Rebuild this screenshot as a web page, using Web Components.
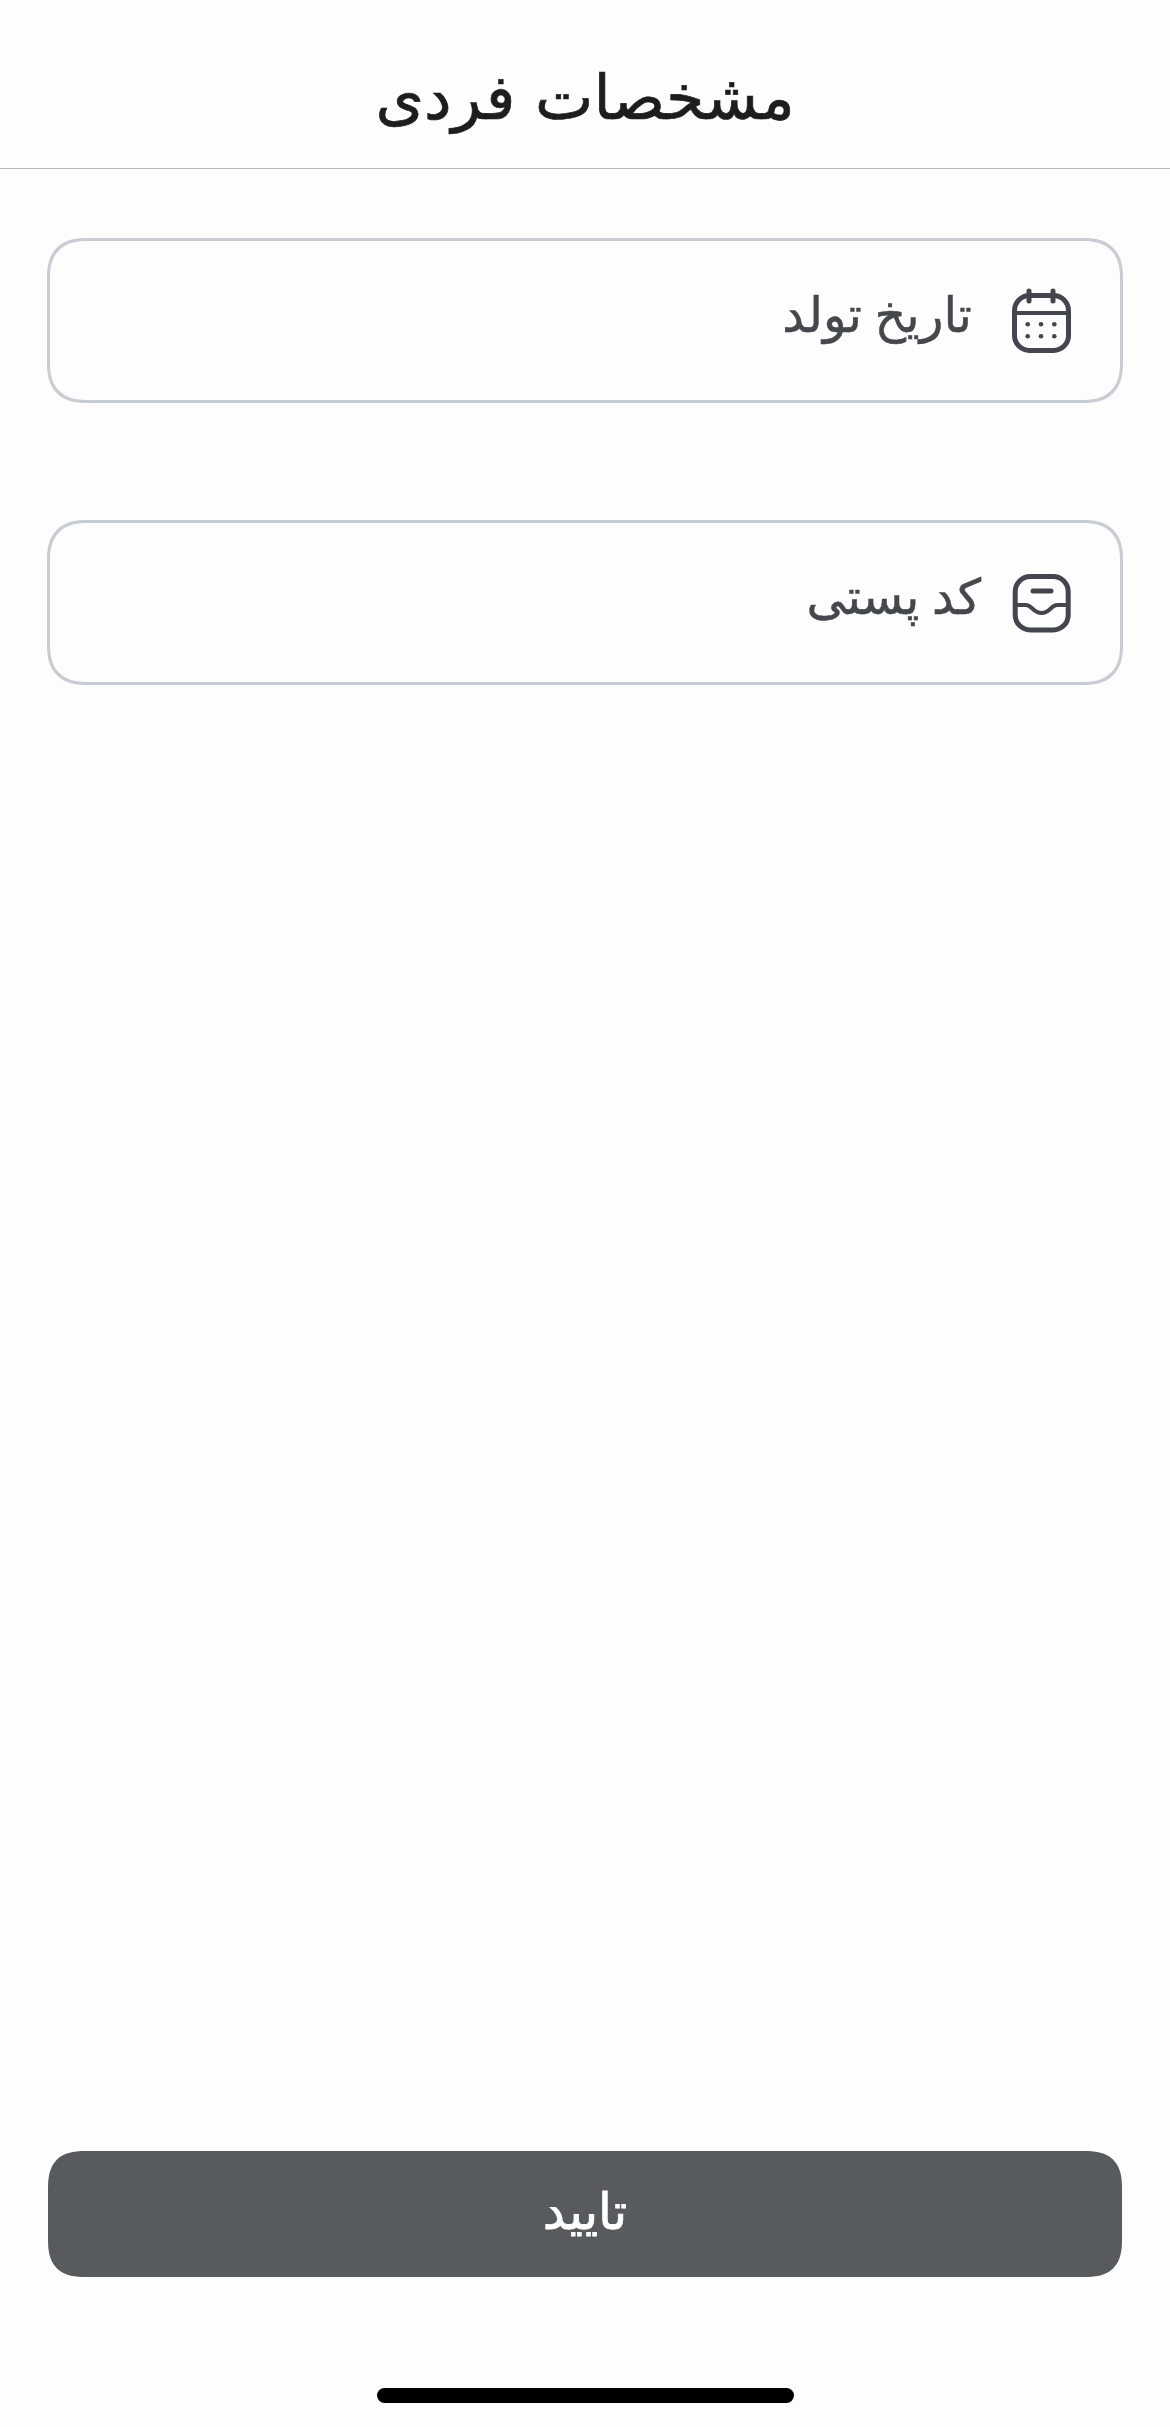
<!DOCTYPE html>
<html lang="fa" dir="rtl">
<head>
<meta charset="utf-8">
<title>مشخصات فردی</title>
<style>
    html, body { margin: 0; padding: 0; background: #fdfdfe; }
    body { font-family: "DejaVu Sans", sans-serif; }
</style>
</head>
<body>
<profile-screen>
    <screen-header slot="header">مشخصات فردی</screen-header>
    <form-field style="--icon-gap: 37px">
        <svg slot="icon" width="64" height="68" viewBox="0 0 64 68" fill="none" stroke="#43474d" stroke-linecap="round">
            <rect x="5.5" y="8.5" width="54" height="55" rx="15" stroke-width="5"/>
            <path d="M20 4V14M44 4V14" stroke-width="5"/>
            <path d="M5.5 26H59.5" stroke-width="4"/>
            <g fill="#43474d" stroke="none">
                <circle cx="18.7" cy="37.3" r="2.3"/><circle cx="32" cy="37.3" r="2.3"/><circle cx="45.3" cy="37.3" r="2.3"/>
                <circle cx="18.7" cy="49.3" r="2.3"/><circle cx="32" cy="49.3" r="2.3"/><circle cx="45.3" cy="49.3" r="2.3"/>
            </g>
        </svg>
        تاریخ تولد
    </form-field>
    <form-field style="--icon-gap: 28px">
        <svg slot="icon" width="64" height="64" viewBox="0 0 64 64" fill="none" stroke="#43474d" stroke-linecap="round">
            <rect x="6.2" y="5.5" width="53" height="53.5" rx="15" stroke-width="5"/>
            <path d="M24 20H42" stroke-width="5"/>
            <path d="M6 34H17C23 34 24 42 32.7 42C41 42 42 34 48 34H59" stroke-width="4"/>
        </svg>
        کد پستی
    </form-field>
    <primary-button slot="footer">تایید</primary-button>
    <home-indicator slot="footer"></home-indicator>
</profile-screen>

<script>
class ProfileScreen extends HTMLElement {
    constructor() {
        super();
        this.attachShadow({ mode: 'open' });
        this.shadowRoot.innerHTML = `
            <style>
                :host {
                    display: flex;
                    flex-direction: column;
                    height: 2427px;
                    overflow: hidden;
                    box-sizing: border-box;
                }
                main {
                    flex: 1;
                    display: flex;
                    flex-direction: column;
                    gap: 117px;
                    padding: 69px 47px 0;
                }
                footer {
                    display: flex;
                    flex-direction: column;
                    padding: 0 48px;
                }
            </style>
            <slot name="header"></slot>
            <main><slot></slot></main>
            <footer><slot name="footer"></slot></footer>
        `;
    }
}

class ScreenHeader extends HTMLElement {
    constructor() {
        super();
        this.attachShadow({ mode: 'open' });
        this.shadowRoot.innerHTML = `
            <style>
                :host {
                    display: flex;
                    align-items: center;
                    justify-content: center;
                    height: 169px;
                    box-sizing: border-box;
                    padding-top: 26px;
                    border-bottom: 1px solid #b8b8ba;
                    font-size: 62px;
                    -webkit-text-stroke: 0.7px #1c1d1f;
                    color: #1c1d1f;
                }
            </style>
            <slot></slot>
        `;
    }
}

class FormField extends HTMLElement {
    constructor() {
        super();
        this.attachShadow({ mode: 'open' });
        this.shadowRoot.innerHTML = `
            <style>
                :host {
                    display: flex;
                    align-items: center;
                    gap: var(--icon-gap, 36px);
                    height: 165px;
                    box-sizing: border-box;
                    padding: 0 47px 0 0;
                    border: 3px solid #c8ccd3;
                    border-radius: 40px;
                    corner-shape: superellipse(1.3);
                    font-size: 49px;
                    word-spacing: -3px;
                    -webkit-text-stroke: 0.5px #44474c;
                    color: #44474c;
                }
                .text { margin-top: -10px; }
                .icon { display: flex; }
            </style>
            <span class="icon"><slot name="icon"></slot></span>
            <span class="text"><slot></slot></span>
        `;
    }
}

class PrimaryButton extends HTMLElement {
    constructor() {
        super();
        this.attachShadow({ mode: 'open' });
        this.shadowRoot.innerHTML = `
            <style>
                :host {
                    display: flex;
                    align-items: center;
                    justify-content: center;
                    height: 126px;
                    border-radius: 38px;
                    corner-shape: superellipse(1.4);
                    background: #585b5e;
                    color: #fff;
                    font-size: 50px;
                    -webkit-text-stroke: 0.8px #fff;
                    padding-bottom: 4px;
                    box-sizing: border-box;
                }
            </style>
            <slot></slot>
        `;
    }
}

class HomeIndicator extends HTMLElement {
    constructor() {
        super();
        this.attachShadow({ mode: 'open' });
        this.shadowRoot.innerHTML = `
            <style>
                :host {
                    display: block;
                    width: 417px;
                    height: 15px;
                    margin: 111px auto 24px;
                    border-radius: 8px;
                    background: #000;
                }
            </style>
        `;
    }
}

customElements.define('profile-screen', ProfileScreen);
customElements.define('screen-header', ScreenHeader);
customElements.define('form-field', FormField);
customElements.define('primary-button', PrimaryButton);
customElements.define('home-indicator', HomeIndicator);
</script>
</body>
</html>
